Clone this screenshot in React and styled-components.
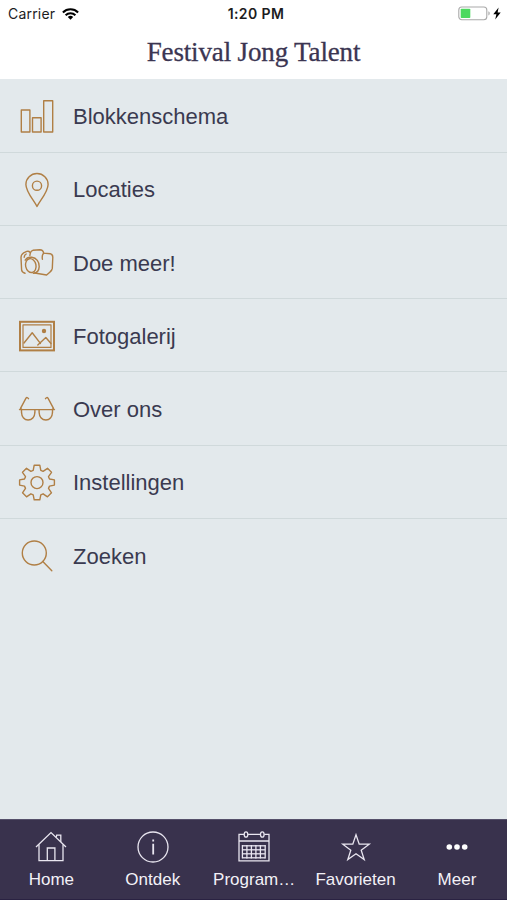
import React from 'react';
import styled, { createGlobalStyle, ThemeProvider } from 'styled-components';

const theme = {
  colors: {
    bar: '#39324d',
    text: '#3a3a50',
    title: '#3b3552',
    bg: '#e3e9ec',
    border: '#d0d9db',
    accent: '#b07f45',
  },
  fonts: {
    body: "'Liberation Sans', Arial, sans-serif",
    display: "'Liberation Serif', 'Times New Roman', serif",
    status: "Inter, 'Liberation Sans', sans-serif",
  },
};

const GlobalStyle = createGlobalStyle`
  * {
    box-sizing: border-box;
  }

  body {
    margin: 0;
    background: #e3e9ec;
  }
`;

const Screen = styled.div`
  display: flex;
  flex-direction: column;
  height: 100vh;
  background: ${({ theme }) => theme.colors.bg};
  font-family: ${({ theme }) => theme.fonts.body};
`;

const Header = styled.header`
  flex: none;
  height: 79.4px;
  background: #fff;
`;

const StatusBar = styled.div`
  display: grid;
  grid-template-columns: 1fr auto 1fr;
  align-items: center;
  height: 27px;
  padding: 0 5px 0 8px;
  font-family: ${({ theme }) => theme.fonts.status};
  font-size: 14px;
  line-height: 27px;
  color: #1c1c1e;
`;

const Carrier = styled.div`
  display: flex;
  align-items: center;
  gap: 7px;
  letter-spacing: 0.2px;
`;

const Clock = styled.div`
  font-size: 14px;
  font-weight: 600;
  letter-spacing: 0.4px;
  transform: translateX(1px);
`;

const Battery = styled.div`
  display: flex;
  align-items: center;
  justify-content: flex-end;
`;

const Title = styled.h1`
  margin: 0;
  font-family: ${({ theme }) => theme.fonts.display};
  font-size: 27px;
  font-weight: 400;
  line-height: 51px;
  letter-spacing: -0.15px;
  text-align: center;
  color: ${({ theme }) => theme.colors.title};
  -webkit-text-stroke: 0.3px ${({ theme }) => theme.colors.title};
`;

const Menu = styled.nav`
  flex: 1;
  display: flex;
  flex-direction: column;
`;

const MenuRow = styled.a`
  display: flex;
  align-items: center;
  gap: 17px;
  height: 73.25px;
  padding: 1.5px 0 0 18px;
  border-bottom: 1px solid ${({ theme }) => theme.colors.border};
  font-size: 22px;
  color: ${({ theme }) => theme.colors.text};

  &:last-child {
    border-bottom-color: transparent;
  }
`;

const MenuLabel = styled.span`
  padding-top: 1.6px;
`;

const MenuIcon = styled.svg`
  width: 38px;
  height: 38px;
  fill: none;
  stroke: ${({ theme }) => theme.colors.accent};
  stroke-width: 1.4;
  stroke-linejoin: round;
  stroke-linecap: round;
`;

const TabBar = styled.footer`
  flex: none;
  display: grid;
  grid-template-columns: repeat(5, 101.4px);
  height: 81px;
  padding-left: 0.7px;
  overflow: hidden;
  background: ${({ theme }) => theme.colors.bar};
  border-top: 1px solid #55506a;
  border-bottom: 1px solid #2a2242;
`;

const Tab = styled.a`
  display: flex;
  flex-direction: column;
  align-items: center;
  padding-top: 10px;
  min-width: 0;
  font-size: 17px;
  line-height: 20px;
  color: #f3f1f7;
`;

const TabIcon = styled.svg`
  width: 34px;
  height: 34px;
  margin-bottom: 6px;
  fill: none;
  stroke: #e9e6f0;
  stroke-width: 1.3;
`;

const menu = [
  {
    label: 'Blokkenschema',
    icon: (
      <>
        <path d="M3.3 13h8.6v22H3.3z" />
        <path d="M14.5 20.8h8.6V35h-8.6z" />
        <path d="M25.7 3.8h9V35h-9z" />
      </>
    ),
  },
  {
    label: 'Locaties',
    icon: (
      <>
        <path d="M19 35.5C16 29.5 7.9 20.8 7.9 13.4a11.1 10.9 0 0 1 22.2 0C30.1 20.8 22 29.5 19 35.5z" />
        <circle cx="19" cy="14.7" r="4.6" />
      </>
    ),
  },
  {
    label: 'Doe meer!',
    icon: (
      <>
        <path d="M7 29.3c-2.2-.6-3.3-1.7-3.4-3.5L3 13.6c0-2.2.9-3.7 2.6-4.8l3.2-1.4c1.2-.4 2.4-.1 3.1.8" />
        <path d="M11.9 11.6c.1-2.8 1-4.7 3-5.3l7-.6c2 0 3.4 1.2 3.7 3.4l6.7.6c1.7.4 2.5 1.7 2.5 3.5l-.5 11.2c-.2 1.5-1 2.5-2.2 3.5l-3.5 3.1-11.9-2" />
        <path d="M24.4 15.2c-.5-3.2 0-5 1.4-6.1M6.2 13.3c.1-1.6.7-2.6 2-3.3" />
        <ellipse cx="12.8" cy="21.6" rx="5.2" ry="7" transform="rotate(-12 12.8 21.6)" />
        <path d="M7.2 16.2c1.2-2.2 3.6-3.3 6.6-2.9 4.7.6 7.6 4.6 7.4 9.3-.2 4-2.2 6.4-5.8 6.6" />
      </>
    ),
  },
  {
    label: 'Fotogalerij',
    icon: (
      <>
        <rect x="2" y="4.8" width="34" height="28.6" strokeWidth="2" strokeLinejoin="miter" />
        <rect x="5" y="7.8" width="28" height="22.6" strokeWidth="1.2" />
        <path d="M6 26l8.2-10.2 8.2 10.6M19.8 28l8-7.5 5.2 6" />
        <circle cx="26" cy="14" r="2.2" fill="#b07f45" stroke="none" />
      </>
    ),
  },
  {
    label: 'Over ons',
    icon: (
      <>
        <path d="M1.5 19.6h35M3.5 19v3.4c.2 4.7 3 7.6 6.6 7.6 3.8 0 6.6-3 6.8-7.6v-2.8M21.1 19.6v2.8c.2 4.6 3 7.6 6.8 7.6 3.6 0 6.4-2.9 6.6-7.6V19" />
        <path d="M2.4 18.6L8 8.2c.7-1 1.7-.8 2.5.5M35.6 18.6L30 8.2c-.7-1-1.7-.8-2.5.5" />
      </>
    ),
  },
  {
    label: 'Instellingen',
    icon: (
      <>
        <path d="M16.2 1.2h5.6l1 5.1 2.3 1 4.4-3 4 4-3 4.4 1 2.3 4.9.9v5.2l-4.9 1-1 2.3 3 4.4-4 4-4.4-3-2.3 1-1 5h-5.6l-1-5-2.3-1-4.4 3-4-4 3-4.4-1-2.3-4.9-1v-5.2l4.9-.9 1-2.3-3-4.4 4-4 4.4 3 2.3-1z" />
        <circle cx="19" cy="18.6" r="6" />
      </>
    ),
  },
  {
    label: 'Zoeken',
    icon: (
      <>
        <circle cx="16.3" cy="16" r="12" />
        <path d="M24.8 24.6l9 9.2" />
      </>
    ),
  },
];

const calendarRows = [15.8, 19.8, 23.8, 27.8];
const calendarCols = [5.4, 9.9, 14.4, 18.9, 23.4, 28.2];

const tabs = [
  {
    label: 'Home',
    icon: (
      <>
        <path d="M2 17L17 2.6 32 17" />
        <path d="M5 14.5v16.2h24V14.5M13.3 30.7V18h7.6v12.7" />
        <path d="M22.3 7.2l.4-2.1h4.1v7" />
      </>
    ),
  },
  {
    label: 'Ontdek',
    icon: (
      <>
        <circle cx="17" cy="17" r="15" />
        <path d="M17.2 13.8v10.6M17.2 9.5v2.1" strokeWidth="1.8" />
      </>
    ),
  },
  {
    label: 'Program…',
    icon: (
      <>
        <path d="M7 4.3H2v26.5h30V4.3h-4.7M11 4.3h12.3M2 11h30" />
        <ellipse cx="9" cy="4.5" rx="1.8" ry="2.7" />
        <ellipse cx="25.3" cy="4.5" rx="1.8" ry="2.7" />
        {calendarRows.map((y) => (
          <path key={y} d={`M5.4 ${y}h22.8`} />
        ))}
        {calendarCols.map((x) => (
          <path key={x} d={`M${x} 15v13.4`} />
        ))}
      </>
    ),
  },
  {
    label: 'Favorieten',
    icon: (
      <path d="M17 4.8l3.2 9.4h10l-8 6 3 9.3-8.2-5.8-8.2 5.8 3-9.3-8-6h10z" />
    ),
  },
  {
    label: 'Meer',
    icon: (
      <g fill="#fff" stroke="none">
        <circle cx="9.3" cy="17" r="2.8" />
        <circle cx="17" cy="17" r="2.8" />
        <circle cx="24.7" cy="17" r="2.8" />
      </g>
    ),
  },
];

const WifiIcon = () => (
  <svg width="17" height="12" viewBox="0 0 17 12" fill="none" stroke="#000" strokeWidth="2.1">
    <path d="M.9 4.4a10.8 10.8 0 0 1 15.2 0" />
    <path d="M3.6 7.3a7 7 0 0 1 9.8 0" />
    <path d="M8.5 11.8L5.8 9.1a3.8 3.8 0 0 1 5.4 0z" fill="#000" stroke="none" />
  </svg>
);

const BatteryIcon = () => (
  <svg width="44" height="15" viewBox="0 0 44 15">
    <rect x=".8" y="1" width="28" height="12.8" rx="3" fill="#fff" stroke="#a9a9a9" strokeWidth="1.1" />
    <rect x="2.7" y="2.8" width="9.6" height="9.2" rx=".8" fill="#4cd95f" />
    <path d="M30.4 5.3c1.8.6 1.8 3.6 0 4.2z" fill="#a9a9a9" />
    <path d="M40.6 1.4l-5.3 6.8h3.1l-1.2 5.2 5.5-7h-3.1z" fill="#000" />
  </svg>
);

const App = () => (
  <ThemeProvider theme={theme}>
    <GlobalStyle />
    <Screen>
      <Header>
        <StatusBar>
          <Carrier>
            <span>Carrier</span>
            <WifiIcon />
          </Carrier>
          <Clock>1:20 PM</Clock>
          <Battery>
            <BatteryIcon />
          </Battery>
        </StatusBar>
        <Title>Festival Jong Talent</Title>
      </Header>

      <Menu>
        {menu.map(({ label, icon }) => (
          <MenuRow key={label}>
            <MenuIcon viewBox="0 0 38 38">{icon}</MenuIcon>
            <MenuLabel>{label}</MenuLabel>
          </MenuRow>
        ))}
      </Menu>

      <TabBar>
        {tabs.map(({ label, icon }) => (
          <Tab key={label}>
            <TabIcon viewBox="0 0 34 34">{icon}</TabIcon>
            <span>{label}</span>
          </Tab>
        ))}
      </TabBar>
    </Screen>
  </ThemeProvider>
);

export default App;
